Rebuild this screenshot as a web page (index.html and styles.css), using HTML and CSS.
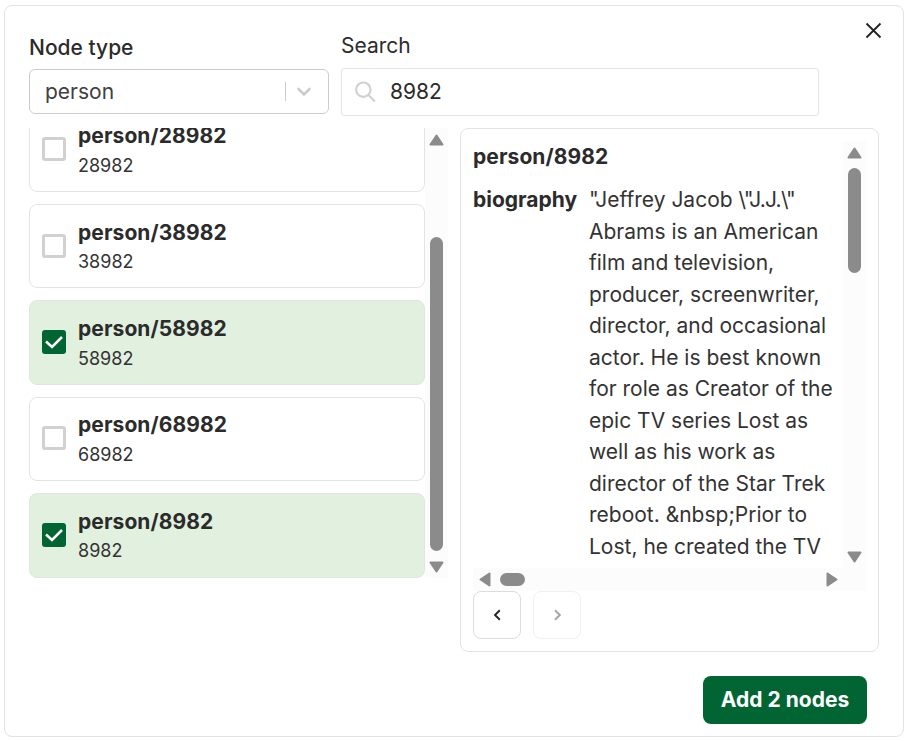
FILE: index.html
```html
<!DOCTYPE html>
<html lang="en">
<head>
<meta charset="utf-8">
<title>Add nodes</title>
<link rel="stylesheet" href="styles.css">
</head>
<body>
<div class="modal">
  <button class="close" aria-label="Close"><svg width="17" height="17" viewBox="0 0 17 17"><path d="M1.500 1.500l14 14M15.500 1.500l-14 14"/></svg></button>
  <div class="filters">
    <div class="field type-field">
      <label class="label strong">Node type</label>
      <div class="select">
        <span class="select-value">person</span>
        <span class="divider"></span>
        <svg class="chevron" width="16" height="10" viewBox="0 0 16 10"><path d="M2.500 2l5.500 5.500L13.500 2"/></svg>
      </div>
    </div>
    <div class="field search-field">
      <label class="label">Search</label>
      <div class="search">
        <svg width="22" height="22" viewBox="0 0 22 22"><circle cx="9.300" cy="8.700" r="7.200"/><path d="M14.500 14l6.500 6.500"/></svg>
        <span>8982</span>
      </div>
    </div>
  </div>
  <div class="content">
    <div class="list-pane">
      <div class="list">
        <div class="card"><span class="box"></span><div><div class="name">person/28982</div><div class="key">28982</div></div></div>
        <div class="card"><span class="box"></span><div><div class="name">person/38982</div><div class="key">38982</div></div></div>
        <div class="card selected"><span class="box"><svg width="24" height="24" viewBox="0 0 24 24"><path d="M4 11.500l6 5.500L20 7"/></svg></span><div><div class="name">person/58982</div><div class="key">58982</div></div></div>
        <div class="card"><span class="box"></span><div><div class="name">person/68982</div><div class="key">68982</div></div></div>
        <div class="card selected"><span class="box"><svg width="24" height="24" viewBox="0 0 24 24"><path d="M4 11.500l6 5.500L20 7"/></svg></span><div><div class="name">person/8982</div><div class="key">8982</div></div></div>
      </div>
      <div class="vbar">
        <svg class="arrow" width="15" height="12" viewBox="0 0 15 12"><path d="M7.500 1.500L13.500 10.500H1.500z"/></svg>
        <span class="thumb list-thumb"></span>
        <svg class="arrow" width="15" height="12" viewBox="0 0 15 12"><path d="M7.500 10.500L13.500 1.500H1.500z"/></svg>
      </div>
    </div>
    <div class="detail">
      <div class="scroller">
        <div class="detail-body">
          <div class="name">person/8982</div>
          <div class="attribute">
            <div class="name attribute-name">biography</div>
            <div class="attribute-value">"Jeffrey Jacob <span class="quoted">\"J.J.\"</span><br>Abrams is an American<br>film and television,<br>producer, screenwriter,<br>director, and occasional<br>actor. He is best known<br>for role as Creator of the<br>epic TV series Lost as<br>well as his work as<br>director of the Star Trek<br>reboot. &amp;nbsp;Prior to<br>Lost, he created the TV</div>
          </div>
        </div>
        <div class="vbar">
          <svg class="arrow" width="15" height="12" viewBox="0 0 15 12"><path d="M7.500 1.500L13.500 10.500H1.500z"/></svg>
          <span class="thumb detail-thumb"></span>
          <svg class="arrow" width="15" height="12" viewBox="0 0 15 12"><path d="M7.500 10.500L13.500 1.500H1.500z"/></svg>
        </div>
        <div class="hbar">
          <svg class="arrow" width="12" height="15" viewBox="0 0 12 15"><path d="M1.500 7.500L10.500 13.500V1.500z"/></svg>
          <span class="hthumb"></span>
          <svg class="arrow" width="12" height="15" viewBox="0 0 12 15"><path d="M10.500 7.500L1.500 13.500V1.500z"/></svg>
        </div>
      </div>
      <div class="pager">
        <button class="page" aria-label="Previous"><svg width="8" height="12" viewBox="0 0 8 12"><path d="M6.800 1.300L2 6l4.800 4.700"/></svg></button>
        <button class="page disabled" aria-label="Next"><svg width="8" height="12" viewBox="0 0 8 12"><path d="M2 1.300L6.800 6 2 10.700"/></svg></button>
      </div>
    </div>
  </div>
  <div class="footer"><button class="submit">Add 2 nodes</button></div>
</div>
</body>
</html>
```

FILE: styles.css
```css
* { box-sizing: border-box; }
body {
  margin: 0;
  padding: 5px 3px 0 4px;
  background: #fff;
  color: #2b2b2b;
  font: 21px/31.5px Inter, sans-serif;
}
button { font: inherit; padding: 0; background: none; border: 0; }
svg { display: block; flex: none; fill: none; stroke: currentColor; }
.modal {
  position: relative;
  height: 732px;
  padding: 24px;
  border: 1px solid #e3e3e3;
  border-radius: 8px;
  overflow: hidden;
}
.close { position: absolute; top: 16px; right: 21px; color: #222; }
.close svg { stroke-width: 1.8; }
.filters { display: flex; align-items: flex-start; gap: 12px; height: 98px; }
.label { display: block; line-height: 32px; }
.strong { font-weight: 500; }
.type-field { width: 300px; padding-top: 2px; }
.search-field { width: 478px; }
.select {
  display: flex;
  align-items: center;
  height: 45px;
  margin-top: 5px;
  padding: 0 16px 0 15px;
  border: 1px solid #ccc;
  border-radius: 6px;
}
.select-value { flex: 1; color: #404040; }
.divider { width: 1px; height: 19px; margin-right: 10px; background: #ccc; }
.chevron { color: #ccc; stroke-width: 2.6; stroke-linecap: round; margin-top: 1px; }
.search {
  display: flex;
  align-items: center;
  gap: 14px;
  height: 48px;
  margin-top: 6px;
  padding: 0 12px;
  border: 1px solid #e3e3e3;
  border-radius: 3px;
}
.search svg { color: #d1d1d1; stroke-width: 2.2; }
.content { display: flex; gap: 12px; height: 524px; }
.list-pane { display: flex; width: 419px; height: 450px; }
.list {
  display: flex;
  flex-direction: column;
  justify-content: flex-end;
  gap: 12px;
  width: 396px;
  padding-bottom: 0.3px;
  overflow: hidden;
}
.card {
  display: flex;
  flex: none;
  align-items: center;
  gap: 12px;
  height: 84.4px;
  padding: 0 12px;
  border: 1px solid #e3e3e3;
  border-radius: 8px;
}
.card:last-child { height: 84.6px; }
.selected { background: #e2f0df; }
.box { width: 24px; height: 24px; margin-top: -1px; border: 3px solid #d1d1d1; border-radius: 3px; }
.selected .box { border: 0; background: #006532; color: #fff; }
.box svg { stroke-width: 2.5; }
.name { font-weight: 700; letter-spacing: 0.08px; }
.card .name { margin-top: -0.5px; }
.key { font-size: 18px; line-height: 27px; color: #333; }
.vbar {
  display: flex;
  flex-direction: column;
  align-items: center;
  justify-content: space-between;
  width: 23px;
  padding: 6px 0 5px;
  background: #fcfcfc;
}
.arrow { fill: #8b8b8b; stroke: #8b8b8b; stroke-width: 2; stroke-linejoin: round; }
.thumb { width: 13px; border-radius: 7px; background: #8b8b8b; }
.list-thumb { height: 314px; margin: auto 0 10px; }
.detail-thumb { height: 105px; margin: 9px 0 auto; }
.detail { width: 419px; padding: 12px; border: 1px solid #e3e3e3; border-radius: 8px; }
.scroller {
  display: grid;
  grid-template-columns: 370px 23px;
  grid-template-rows: 427px 23px;
  height: 450px;
}
.detail-body { overflow: hidden; white-space: nowrap; }
.attribute { display: flex; gap: 12px; margin-top: 11.5px; }
.attribute-name { width: 104px; letter-spacing: 0; }
.attribute-value { color: #333; }
.quoted { letter-spacing: -0.75px; }
.hbar {
  grid-column: 1 / -1;
  display: flex;
  align-items: center;
  padding: 0 28px 0 6px;
  background: #fcfcfc;
}
.hthumb { width: 25px; height: 13px; margin: 0 auto 0 9px; border-radius: 7px; background: #8b8b8b; }
.pager { display: flex; gap: 12px; }
.page {
  display: flex;
  align-items: center;
  justify-content: center;
  width: 48px;
  height: 48px;
  border: 1px solid #dcdcdc;
  border-radius: 8px;
  color: #222;
}
.page svg { stroke-width: 1.9; }
.disabled { opacity: .4; }
.footer { display: flex; justify-content: flex-end; margin: 24px 12px 0 0; }
.submit {
  width: 164px;
  height: 48px;
  border-radius: 8px;
  background: #006532;
  color: #fff;
  font-weight: 700;
}
```
